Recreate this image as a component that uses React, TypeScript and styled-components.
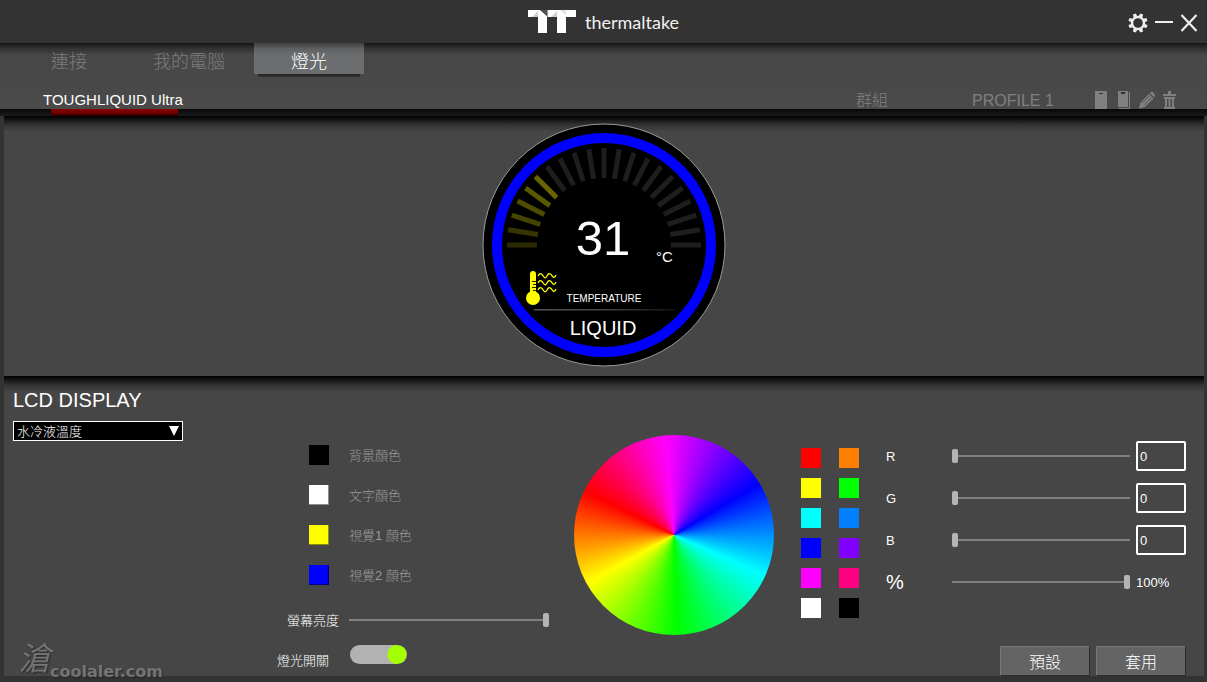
import React, { useState } from "react";
import styled, { createGlobalStyle } from "styled-components";

const GlobalStyle = createGlobalStyle`
  *, *::before, *::after { box-sizing: border-box; }
  body {
    margin: 0;
    background: #333333;
    color: #ffffff;
    font-family: "Liberation Sans", "Noto Sans CJK TC", sans-serif;
    font-size: 13px;
    font-weight: 300;
  }
  button, input, select { font: inherit; color: inherit; }
  button { cursor: pointer; }
`;

const Shell = styled.div`
  position: relative;
  display: flex;
  flex-direction: column;
  min-height: 100vh;
  min-width: 1000px;
  padding-bottom: 6px;
`;

const TitleBar = styled.header`
  display: grid;
  grid-template-columns: 1fr auto 1fr;
  align-items: center;
  height: 43px;
  padding: 0 8px;
`;

const Brand = styled.div`
  grid-column: 2;
  display: flex;
  align-items: center;
  gap: 9px;
  padding-top: 1px;
  font-family: Lato, "Liberation Sans", sans-serif;
  font-size: 18px;
  font-weight: 400;
  line-height: 28px;
  color: #f0f0f0;
`;

const WindowActions = styled.div`
  justify-self: end;
  display: flex;
  gap: 4px;
`;

const IconButton = styled.button`
  display: flex;
  padding: 0;
  border: 0;
  background: none;
`;

const NavArea = styled.nav`
  display: flex;
  flex-direction: column;
  justify-content: space-between;
  height: 66px;
  background: linear-gradient(#141414, #303030 5px, #474747 12px, #4a4a4a);
`;

const TabRow = styled.div`
  display: flex;
  gap: 10px;
  padding-left: 14px;
`;

const Tab = styled.button<{ $active?: boolean }>`
  position: relative;
  width: 110px;
  height: 31px;
  padding: 7px 0 0;
  border: 0;
  font-size: 18px;
  line-height: 24px;
  color: ${(p) => (p.$active ? "#ffffff" : "#7c7c7c")};
  background: ${(p) =>
    p.$active ? "linear-gradient(#3e3f40, #606163 6px, #6c6d6f 12px)" : "none"};

  &::after {
    content: "";
    display: ${(p) => (p.$active ? "block" : "none")};
    position: absolute;
    left: 4px;
    right: 4px;
    top: 100%;
    height: 3px;
    background: linear-gradient(#222222, #333333);
  }
`;

const DeviceRow = styled.div`
  display: flex;
  align-items: flex-end;
  padding: 0 29px 0 43px;
  color: #808080;
  font-size: 16px;
  line-height: 18px;
`;

const DeviceTab = styled.button`
  position: relative;
  margin-right: auto;
  padding: 0;
  border: 0;
  background: none;
  color: #ffffff;
  font-size: 15px;
  line-height: 18px;

  &::after {
    content: "";
    position: absolute;
    left: 8px;
    right: 5px;
    top: 100%;
    height: 7px;
    background: linear-gradient(#8a0000, #6a0000 60%, #200000);
  }
`;

const ProfileButton = styled.button<{ $width: number }>`
  width: ${(p) => p.$width}px;
  height: 17px;
  padding: 0;
  border: 0;
  background: none;
  text-align: left;
`;

const ProfileActions = styled.div`
  display: flex;
  gap: 7px;
`;

const Panel = styled.section`
  margin: 0 3px 0 4px;
  background: linear-gradient(#000000, #101010 3px, #333333 9px, #464646 16px);
`;

const Divider = styled.div`
  height: 7px;
  background: linear-gradient(#080808, #1a1a1a);
`;

const PreviewPanel = styled(Panel)`
  display: flex;
  justify-content: center;
  padding: 7px 0 9px;
`;

const SettingsPanel = styled(Panel)`
  flex: 1;
  display: grid;
  grid-template-columns: minmax(180px, 1fr) 297px 227px 85px 300px;
  padding: 0 18px 0 9px;
`;

const DisplayColumn = styled.div`
  padding-top: 12px;
`;

const Heading = styled.h2`
  margin: 0 0 9px;
  font-size: 20px;
  font-weight: 400;
  line-height: 24px;
`;

const SelectBox = styled.div`
  position: relative;
  width: 170px;

  svg {
    position: absolute;
    right: 4px;
    top: 5px;
    pointer-events: none;
  }
`;

const Select = styled.select`
  display: block;
  width: 100%;
  height: 20px;
  padding: 2px 20px 0 3px;
  border: 1px solid #ffffff;
  border-radius: 0;
  background: #000000;
  appearance: none;
  line-height: 16px;
`;

const Column = styled.div`
  padding-top: 59px;
`;

const ColorRow = styled.label`
  display: grid;
  grid-template-columns: 72px 1fr;
  align-items: center;
  height: 40px;
  color: #999999;
  line-height: 20px;
`;

const ColorName = styled.span`
  padding-top: 2px;
`;

const Swatch = styled.button<{ $color: string; $bevel?: boolean }>`
  width: 20px;
  height: 20px;
  padding: 0;
  border: 0;
  background: ${(p) => p.$color};
  box-shadow: ${(p) =>
    p.$bevel ? "inset -1px -1px 0 rgba(0, 0, 0, 0.45)" : "none"};
`;

const RowSwatch = styled(Swatch)`
  margin-left: 32px;
`;

const ControlRow = styled.div<{ $height: number; $top?: boolean }>`
  display: grid;
  grid-template-columns: 72px 200px;
  align-items: ${(p) => (p.$top ? "start" : "center")};
  height: ${(p) => p.$height}px;
`;

const ControlLabel = styled.label<{ $gap: number; $drop: number }>`
  padding: ${(p) => p.$drop}px ${(p) => p.$gap}px 0 0;
  text-align: right;
  line-height: 20px;
`;

const Range = styled.input`
  display: block;
  width: 100%;
  height: 14px;
  margin: 0;
  appearance: none;
  background: linear-gradient(#808080, #808080) center / 100% 2px no-repeat;

  &::-webkit-slider-thumb {
    appearance: none;
    width: 6px;
    height: 14px;
    border-radius: 2px;
    background: #b4b4b4;
  }
`;

const Switch = styled.input`
  appearance: none;
  width: 57px;
  height: 19px;
  margin: 0 0 0 1px;
  border-radius: 10px;
  background: radial-gradient(circle at 47px 50%, #a4ff00 9px, #b2b2b2 10px);
`;

const Wheel = styled.div`
  width: 200px;
  height: 200px;
  border-radius: 50%;
  background: conic-gradient(
    from -5deg,
    #ff00ff 0deg,
    #0000ff 64deg,
    #00ffff 119deg,
    #00ff00 183deg,
    #ffff00 246deg,
    #ff0000 301deg,
    #ff00ff 360deg
  );
`;

const SwatchGrid = styled.div`
  display: grid;
  grid-template-columns: 20px 20px;
  gap: 10px 18px;
  padding-top: 13px;
`;

const ChannelRow = styled.div`
  display: grid;
  grid-template-columns: 60px 1fr 50px;
  column-gap: 6px;
  align-items: center;
  height: 42px;
`;

const ChannelLabel = styled.label<{ $large?: boolean }>`
  font-size: ${(p) => (p.$large ? 20 : 13)}px;
`;

const ValueInput = styled.input`
  width: 50px;
  height: 30px;
  padding: 0 2px;
  border: 2px solid #ffffff;
  border-radius: 2px;
  background: transparent;
`;

const Actions = styled.div`
  display: flex;
  justify-content: flex-end;
  gap: 6px;
  padding-top: 43px;
`;

const ActionButton = styled.button`
  width: 90px;
  height: 30px;
  padding: 3px 0 0;
  border: 1px solid;
  border-color: #787878 #2c2c2c #2c2c2c #787878;
  background: #646464;
  font-size: 16px;
  line-height: 24px;
`;

const Watermark = styled.div`
  position: absolute;
  left: 18px;
  bottom: 0;
  display: flex;
  align-items: flex-end;
  color: #808080;
  font: bold 16px/20px "DejaVu Sans", sans-serif;
  text-shadow: 1px 1px 1px #222222;
  opacity: 0.8;
  pointer-events: none;
`;

const WatermarkMark = styled.span`
  font: italic 32px/52px "Noto Sans CJK TC", sans-serif;
`;

function BrandMark() {
  return (
    <svg width="48" height="24" viewBox="0 0 48 24" aria-hidden="true">
      <path d="M0 0H12L19 6V23H10V7H0Z" fill="#fff" />
      <path d="M19.500 0H48V7H38V23H29V7H19.500Z" fill="#fff" />
      <path d="M4 7L10 1V7ZM23 7L29 1V7Z" fill="#cfcfcf" />
      <path d="M13 0H19V5Z" fill="#555" />
      <path d="M32 0H38V5Z" fill="#e2e2e2" />
    </svg>
  );
}

function GearIcon() {
  const teeth = Array.from({ length: 8 }, (_, i) => i * 45 + 22.5);
  return (
    <svg width="22" height="22" viewBox="-11 -12 22 22" aria-hidden="true">
      <circle r="6" fill="none" stroke="#eee" strokeWidth="2.400" />
      {teeth.map((a) => (
        <path key={a} d="M-2 -6.500L-1.500 -9.700H1.500L2 -6.500Z" fill="#eee" transform={`rotate(${a})`} />
      ))}
    </svg>
  );
}

function MinimizeIcon() {
  return (
    <svg width="22" height="22" viewBox="0 0 22 22" aria-hidden="true">
      <path d="M2 11H20" stroke="#eee" strokeWidth="2" />
    </svg>
  );
}

function CloseIcon() {
  return (
    <svg width="20" height="22" viewBox="0 0 20 22" aria-hidden="true">
      <path d="M2.500 4L17.500 20M17.500 4L2.500 20" stroke="#eee" strokeWidth="2.200" />
    </svg>
  );
}

function DocumentIcon() {
  return (
    <svg width="16" height="18" viewBox="0 0 16 18" aria-hidden="true">
      <path d="M2 0H14V18H2Z" fill="#808080" />
      <path d="M6 2.500H10" stroke="#3a3a3a" />
    </svg>
  );
}

function CopyIcon() {
  return (
    <svg width="16" height="18" viewBox="0 0 16 18" aria-hidden="true">
      <path d="M2 0H12V16H2Z" fill="#808080" />
      <path d="M13.500 1V17.500H3" stroke="#808080" fill="none" />
      <path d="M5 2H9" stroke="#303030" strokeWidth="2" />
    </svg>
  );
}

function PencilIcon() {
  return (
    <svg width="16" height="18" viewBox="0 0 16 18" aria-hidden="true">
      <path d="M0 17.500L1.500 11.500L10 3L14.500 7.500L6 16Z" fill="#808080" />
      <path d="M10.800 2.200L12.500 0.700Q14.800 0.800 16 4.200L15.200 6.500Z" fill="#808080" />
      <path d="M3.300 12L10.500 4.800M5.300 14L12.500 6.800" stroke="#4a4a4a" strokeWidth="0.800" />
    </svg>
  );
}

function TrashIcon() {
  return (
    <svg width="16" height="18" viewBox="0 0 16 18" aria-hidden="true">
      <path d="M6 0H9V3H14V5H1V3H6ZM2 6H13V8H2ZM3 8H5V16H3ZM6.500 8H8.500V16H6.500ZM10 8H12V16H10ZM2 16H13V18H2Z" fill="#808080" />
    </svg>
  );
}

function Gauge() {
  const ticks = Array.from({ length: 21 }, (_, i) => i);
  const warm = ["#2c2a00", "#383600", "#454300", "#504d00", "#5c5800", "#686400"];
  return (
    <svg width="244" height="244" viewBox="-122 -122 244 244" role="img" aria-label="Liquid temperature 31 °C"
      fontFamily="Liberation Sans, sans-serif" fill="#ffffff">
      <defs>
        <linearGradient id="rule" x1="0" x2="1">
          <stop offset="0" stopColor="#555" />
          <stop offset="0.5" stopColor="#444" />
          <stop offset="1" stopColor="#111" />
        </linearGradient>
      </defs>
      <circle r="121" fill="#000" stroke="#9a9a9a" />
      <circle r="107" fill="none" stroke="#0000ff" strokeWidth="10" />
      {ticks.map((i) => (
        <path key={i} d="M-97 0H-67" stroke={i < 6 ? warm[i] : "#1e1e1e"} strokeWidth="5"
          transform={`rotate(${i * 9})`} />
      ))}
      <text x="-1" y="10" fontSize="49" textAnchor="middle">31</text>
      <text x="52" y="17" fontSize="15">°C</text>
      <text x="0" y="57" fontSize="10" textAnchor="middle">TEMPERATURE</text>
      <path d="M-70 64H71V65.500H-70Z" fill="url(#rule)" />
      <text x="-1" y="90" fontSize="20" textAnchor="middle">LIQUID</text>
      <g transform="translate(-74 26)">
        <path d="M0 3Q0 0 3 0Q6 0 6 3V22H0Z" fill="#ffff00" />
        <circle cx="3" cy="27" r="7" fill="#ffff00" />
        <path d="M2 10.500H6M3 13.500H6M2 16.500H6M3 19.500H6" stroke="#222200" />
        {[5, 12, 19].map((y) => (
          <path key={y} d={`M8 ${y}Q10 ${y - 4} 12.500 ${y - 1}Q15 ${y + 4} 17 ${y}Q19 ${y - 4} 21.500 ${y - 1}Q24 ${y + 4} 26 ${y - 1}`}
            fill="none" stroke="#ffff00" strokeWidth="1.300" />
        ))}
      </g>
    </svg>
  );
}

const colorRoles = [
  { label: "背景顏色", color: "#000000" },
  { label: "文字顏色", color: "#ffffff" },
  { label: "視覺1 顏色", color: "#ffff00" },
  { label: "視覺2 顏色", color: "#0000ff" },
];

const palette = [
  "#ff0000", "#ff8000", "#ffff00", "#00ff00", "#00ffff", "#0080ff",
  "#0000ff", "#8000ff", "#ff00ff", "#ff0080", "#ffffff", "#000000",
];

function Channel({ name }: { name: string }) {
  const [value, setValue] = useState(0);
  const change = (e: React.ChangeEvent<HTMLInputElement>) =>
    setValue(Math.min(255, Number(e.target.value) || 0));
  return (
    <ChannelRow>
      <ChannelLabel htmlFor={`range-${name}`}>{name}</ChannelLabel>
      <Range id={`range-${name}`} type="range" min={0} max={255} value={value} onChange={change} />
      <ValueInput aria-label={`${name} value`} value={value} onChange={change} />
    </ChannelRow>
  );
}

export default function App() {
  const [opacity, setOpacity] = useState(100);
  return (
    <Shell>
      <GlobalStyle />
      <TitleBar>
        <Brand><BrandMark />thermaltake</Brand>
        <WindowActions>
          <IconButton aria-label="Settings"><GearIcon /></IconButton>
          <IconButton aria-label="Minimize"><MinimizeIcon /></IconButton>
          <IconButton aria-label="Close"><CloseIcon /></IconButton>
        </WindowActions>
      </TitleBar>
      <NavArea>
        <TabRow>
          <Tab>連接</Tab>
          <Tab>我的電腦</Tab>
          <Tab $active>燈光</Tab>
        </TabRow>
        <DeviceRow>
          <DeviceTab>TOUGHLIQUID Ultra</DeviceTab>
          <ProfileButton $width={116}>群組</ProfileButton>
          <ProfileButton $width={121}>PROFILE 1</ProfileButton>
          <ProfileActions>
            <IconButton aria-label="New profile"><DocumentIcon /></IconButton>
            <IconButton aria-label="Copy profile"><CopyIcon /></IconButton>
            <IconButton aria-label="Rename profile"><PencilIcon /></IconButton>
            <IconButton aria-label="Delete profile"><TrashIcon /></IconButton>
          </ProfileActions>
        </DeviceRow>
      </NavArea>
      <Divider />
      <PreviewPanel><Gauge /></PreviewPanel>
      <SettingsPanel>
        <DisplayColumn>
          <Heading>LCD DISPLAY</Heading>
          <SelectBox>
            <Select aria-label="LCD display"><option>水冷液溫度</option></Select>
            <svg width="10" height="10" viewBox="0 0 10 10" aria-hidden="true">
              <path d="M0 0H10L5 10Z" fill="#fff" />
            </svg>
          </SelectBox>
        </DisplayColumn>
        <Column>
          {colorRoles.map(({ label, color }) => (
            <ColorRow key={label}>
              <RowSwatch $color={color} $bevel />
              <ColorName>{label}</ColorName>
            </ColorRow>
          ))}
          <ControlRow $height={50}>
            <ControlLabel htmlFor="brightness" $gap={10} $drop={2}>螢幕亮度</ControlLabel>
            <Range id="brightness" type="range" defaultValue={100} />
          </ControlRow>
          <ControlRow $height={20} $top>
            <ControlLabel htmlFor="light" $gap={20} $drop={6}>燈光開關</ControlLabel>
            <Switch id="light" type="checkbox" role="switch" defaultChecked />
          </ControlRow>
        </Column>
        <Column><Wheel role="img" aria-label="Color wheel" /></Column>
        <Column>
          <SwatchGrid>
            {palette.map((c) => <Swatch key={c} $color={c} aria-label={c} />)}
          </SwatchGrid>
        </Column>
        <Column>
          <Channel name="R" />
          <Channel name="G" />
          <Channel name="B" />
          <ChannelRow>
            <ChannelLabel htmlFor="opacity" $large>%</ChannelLabel>
            <Range id="opacity" type="range" value={opacity}
              onChange={(e: React.ChangeEvent<HTMLInputElement>) => setOpacity(Number(e.target.value))} />
            <output htmlFor="opacity">{opacity}%</output>
          </ChannelRow>
          <Actions>
            <ActionButton>預設</ActionButton>
            <ActionButton>套用</ActionButton>
          </Actions>
        </Column>
      </SettingsPanel>
      <Watermark><WatermarkMark>滄</WatermarkMark>coolaler.com</Watermark>
    </Shell>
  );
}
